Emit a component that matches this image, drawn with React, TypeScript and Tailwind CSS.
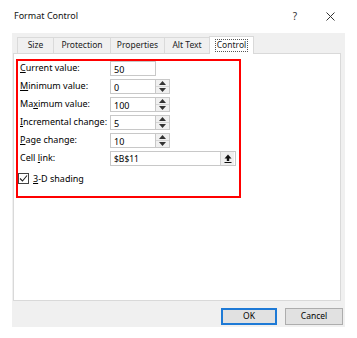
import React from 'react';

const font = { fontFamily: '"Noto Sans", "Open Sans", sans-serif' };

function Spinner() {
  return (
    <div className="flex flex-col w-[14px] h-[15px] border border-[#c8c8c8] border-l-0 bg-[#f0f0f0]">
      <div className="flex-1 flex items-center justify-center border-b border-[#d6d6d6]">
        <svg width="7" height="4" viewBox="0 0 7 4"><path d="M0 4 L3.5 0 L7 4 Z" fill="#333" /></svg>
      </div>
      <div className="flex-1 flex items-center justify-center">
        <svg width="7" height="4" viewBox="0 0 7 4"><path d="M0 0 L3.5 4 L7 0 Z" fill="#333" /></svg>
      </div>
    </div>
  );
}

function Row({ label, value, spin = true }: { label: React.ReactNode; value: string; spin?: boolean }) {
  return (
    <div className="flex items-center h-[15px]">
      <div className="w-[90px] text-[9px] leading-none text-black whitespace-nowrap -mt-[3px]">{label}</div>
      <div className="flex">
        <div className="w-[46px] h-[15px] border border-[#c8c8c8] bg-white text-[9px] leading-none flex items-center pl-[3px] pt-[1px]">{value}</div>
        {spin && <Spinner />}
      </div>
    </div>
  );
}

export default function App() {
  const tabs = [
    { label: 'Size', w: 'w-[36px]' },
    { label: 'Protection', w: 'w-[57px]' },
    { label: 'Properties', w: 'w-[54px]' },
    { label: 'Alt Text', w: 'w-[45px]' },
  ];

  return (
    <div className="w-[357px] h-[338px] bg-white text-black" style={font}>
      {/* title bar */}
      <div className="flex items-center h-[33px] pl-[14px] pr-[22px] pb-[1px]">
        <span className="text-[9px] text-[#111]">Format Control</span>
        <span className="ml-auto text-[10px] text-[#333] mr-[29px]">?</span>
        <svg width="9" height="9" viewBox="0 0 9 9"><path d="M0.5 0.5 L8.5 8.5 M8.5 0.5 L0.5 8.5" stroke="#333" strokeWidth="1" /></svg>
      </div>

      <div className="ml-[12px] w-[333px] h-[294px] bg-[#f0f0f0] pt-[4px]">
        {/* tabs */}
        <div className="flex h-[16px] pl-[5px] items-end">
          {tabs.map((t, i) => (
            <div
              key={i}
              className={`${t.w} h-[16px] flex items-center justify-center text-[8.5px] leading-none text-[#222] border-t border-l border-[#dadada] bg-[#f0f0f0]`}
            >
              {t.label}
            </div>
          ))}
          <div className="w-[45px] h-[18px] -mb-[1px] relative z-10 flex items-center justify-center bg-white border border-b-0 border-[#d9d9d9]">
            <span className="text-[8.5px] leading-none text-[#222] border border-dotted border-[#555] px-[1px] py-[1px]">Control</span>
          </div>
        </div>

        {/* tab page */}
        <div className="ml-[1px] w-[328px] h-[248px] bg-white border border-[#d9d9d9] pt-[5px] pl-[2px]">
          <div className="w-[225px] h-[139px] border-2 border-[#ff0000] pl-[2px] flex flex-col gap-[3px]">
            <Row label={<><u>C</u>urrent value:</>} value="50" spin={false} />
            <Row label={<><u>M</u>inimum value:</>} value="0" />
            <Row label={<>Ma<u>x</u>imum value:</>} value="100" />
            <Row label={<><u>I</u>ncremental change:</>} value="5" />
            <Row label={<><u>P</u>age change:</>} value="10" />
            <div className="flex items-center h-[15px]">
              <div className="w-[90px] text-[9px] leading-none whitespace-nowrap -mt-[3px]">Cell <u>l</u>ink:</div>
              <div className="w-[126px] h-[15px] border border-[#c8c8c8] bg-white flex items-center">
                <span className="flex-1 text-[8.5px] leading-none pl-[3px] pt-[1px]">$B$11</span>
                <div className="w-[14px] h-[13px] mr-[1px] bg-[#f0f0f0] border-l border-[#d0d0d0] flex items-center justify-center">
                  <svg width="8" height="9" viewBox="0 0 8 9">
                    <path d="M4 0.5 L7.5 4.5 L5.2 4.5 L5.2 7 L2.8 7 L2.8 4.5 L0.5 4.5 Z" fill="#111" />
                    <rect x="0.5" y="8" width="7" height="1" fill="#111" />
                  </svg>
                </div>
              </div>
            </div>
            <div className="flex items-center mt-[4px] -ml-[2px]">
              <div className="w-[11px] h-[11px] border border-[#444] bg-white flex items-center justify-center">
                <svg width="9" height="9" viewBox="0 0 9 9"><path d="M1 4.5 L3.5 7 L8 1.5" stroke="#222" strokeWidth="1.1" fill="none" /></svg>
              </div>
              <span className="ml-[4px] text-[9px] leading-none"><u>3</u>-D shading</span>
            </div>
          </div>
        </div>

        {/* buttons */}
        <div className="flex justify-end gap-[8px] mt-[7px] pr-[2px]">
          <div className="w-[56px] h-[17px] bg-[#e1e1e1] border-2 border-[#1e7ad6] flex items-center justify-center text-[8.5px] leading-none">OK</div>
          <div className="w-[58px] h-[17px] bg-[#e1e1e1] border border-[#adadad] flex items-center justify-center text-[8.5px] leading-none">Cancel</div>
        </div>
      </div>
    </div>
  );
}
